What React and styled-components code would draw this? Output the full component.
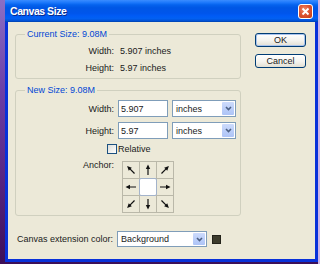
import React from 'react';
import styled, { createGlobalStyle } from 'styled-components';

const Global = createGlobalStyle`
  html, body { margin: 0; padding: 0; }
  body { width: 320px; height: 264px; overflow: hidden; font-family: "Liberation Sans", Arial, sans-serif; }
`;

const Desktop = styled.div`
  width: 320px;
  height: 264px;
  overflow: hidden;
  box-sizing: border-box;
  padding-left: 5px;
  background:
    linear-gradient(to right, transparent 318px, #cbb5e8 318px),
    linear-gradient(to bottom, #8b6fc4 0%, #6b3ea6 35%, #55237f 70%, #3c0f58 100%);
`;

const Window = styled.div`
  width: 313px;
  height: 262px;
  display: flex;
  flex-direction: column;
`;

const TitleBar = styled.div`
  height: 22px;
  flex: none;
  display: flex;
  align-items: center;
  justify-content: space-between;
  padding: 0 5px 0 5px;
  box-sizing: border-box;
  background: linear-gradient(to bottom, #3a8cff 0%, #1c78fb 12%, #0563ee 22%, #0057e5 35%, #0055eb 60%, #005bf5 72%, #0260f2 84%, #0052d6 94%, #0040ab 100%);
`;

const Title = styled.span`
  color: #fff;
  font-weight: bold;
  font-size: 10.5px;
  letter-spacing: -0.45px;
  text-shadow: 1px 1px 0 #0a2a8a;
`;

const CloseBtn = styled.div`
  width: 15px;
  height: 15px;
  box-sizing: border-box;
  border: 1px solid #fff;
  border-radius: 3px;
  background: radial-gradient(circle at 40% 35%, #ef8a6c 0%, #de5533 45%, #c23a14 100%);
  display: flex;
  align-items: center;
  justify-content: center;
`;

const Frame = styled.div`
  flex: 1;
  display: flex;
  border: 3px solid #0831d9;
  border-top: none;
  box-shadow: inset 1px 0 0 #166aee, inset -1px 0 0 #166aee, inset 0 -1px 0 #166aee;
`;

const Body = styled.div`
  flex: 1;
  background: #ece9d8;
  padding: 6px 0 0 7px;
  display: flex;
  flex-direction: column;
  font-size: 9px;
  color: #1a1a1a;
`;

const Top = styled.div`
  display: flex;
`;

const LeftCol = styled.div`
  width: 226px;
  display: flex;
  flex-direction: column;
  gap: 5px;
`;

const RightCol = styled.div`
  margin-left: 14px;
  padding-top: 5px;
  display: flex;
  flex-direction: column;
  gap: 7px;
`;

const Group = styled.fieldset`
  margin: 0;
  min-width: 0;
  border: 1px solid #d0d0bf;
  border-radius: 3px;
  padding: ${(p) => p.$pad};
`;

const Legend = styled.legend`
  margin-left: 9px;
  padding: 0 2px;
  color: #0046d5;
  font-size: 9px;
  line-height: 13px;
`;

const InfoGrid = styled.div`
  display: grid;
  grid-template-columns: 98px auto;
  column-gap: 6px;
  grid-auto-rows: 17px;
  align-items: center;
`;

const Label = styled.span`
  text-align: right;
  white-space: nowrap;
  align-self: ${(p) => (p.$top ? 'start' : 'center')};
  padding-top: ${(p) => (p.$top ? '1px' : '0')};
  line-height: ${(p) => (p.$top ? '9px' : 'normal')};
`;

const FormRow = styled.div`
  display: grid;
  grid-template-columns: 98px auto auto;
  column-gap: 4px;
  align-items: ${(p) => (p.$top ? 'start' : 'center')};
  justify-content: start;
  margin-top: ${(p) => p.$mt || 0}px;
`;

const TextBox = styled.input`
  width: 50px;
  height: 17px;
  box-sizing: border-box;
  border: 1px solid #7f9db9;
  background: #fff;
  padding: 0 2px;
  margin: 0;
  font: 9px "Liberation Sans", Arial, sans-serif;
  color: #1a1a1a;
  outline: none;
`;

const SelectBox = styled.div`
  width: ${(p) => p.$w}px;
  height: ${(p) => p.$h}px;
  box-sizing: border-box;
  border: 1px solid #7f9db9;
  background: #fff;
  display: flex;
  align-items: stretch;
`;

const SelectText = styled.span`
  flex: 1;
  padding-left: 3px;
  display: flex;
  align-items: center;
`;

const DropBtn = styled.span`
  width: 12px;
  margin: 1px;
  border-radius: 1px;
  background: linear-gradient(to bottom, #cddbfc 0%, #bccff9 50%, #aec4f6 100%);
  display: flex;
  align-items: center;
  justify-content: center;
`;

const CheckRow = styled.div`
  display: flex;
  align-items: center;
  height: 15px;
  margin-top: 2px;
  padding-left: 91px;
  gap: 1px;
`;

const CheckBox = styled.span`
  width: 10px;
  height: 10px;
  box-sizing: border-box;
  border: 1px solid #1c5180;
  background: linear-gradient(135deg, #dcdcd7, #fff);
`;

const AnchorGrid = styled.div`
  display: grid;
  grid-template-columns: repeat(3, 16px);
  grid-template-rows: repeat(3, 16px);
  gap: 1px;
  border: 1px solid #bab8a9;
  background: #bab8a9;
  margin-left: 4px;
  margin-top: 1px;
`;

const Cell = styled.div`
  background: #ece9d8;
  display: flex;
  align-items: center;
  justify-content: center;
`;

const CenterCell = styled.div`
  background: #fff;
  border: 1px solid #a3b3cb;
  border-radius: 2px;
  margin: -1px;
`;

const Button = styled.button`
  width: 51px;
  height: 14px;
  padding: 0;
  margin: 0;
  box-sizing: border-box;
  border: 1px solid #003c74;
  border-radius: 3px;
  background: linear-gradient(to bottom, #ffffff 0%, #f4f3ee 55%, #e2dfd3 100%);
  box-shadow: ${(p) => (p.$default ? 'inset 0 0 0 1px #a9c4ee' : 'none')};
  font: 9px "Liberation Sans", Arial, sans-serif;
  color: #1a1a1a;
  line-height: 12px;
`;

const BottomRow = styled.div`
  display: flex;
  align-items: center;
  margin-top: 15px;
`;

const BottomLabel = styled.span`
  width: 98px;
  text-align: right;
  white-space: nowrap;
  margin-right: 4px;
`;

const Swatch = styled.span`
  width: 9px;
  height: 9px;
  box-sizing: border-box;
  margin-left: 5px;
  border: 1px solid #24231a;
  background: #3d3c2c;
`;

const Chevron = () => (
  <svg width="7" height="5" viewBox="0 0 7 5">
    <path d="M1 1 L3.5 3.5 L6 1" fill="none" stroke="#4d6185" strokeWidth="1.6" />
  </svg>
);

const Arrow = ({ deg }) => (
  <svg width="16" height="16" viewBox="0 0 16 16" style={{ transform: `rotate(${deg}deg)` }}>
    <path d="M8 13 V6.5" stroke="#111" strokeWidth="1.2" />
    <polygon points="8,2.5 5.8,7 10.2,7" fill="#111" />
  </svg>
);

const Select = ({ w, h, children }) => (
  <SelectBox $w={w} $h={h}>
    <SelectText>{children}</SelectText>
    <DropBtn><Chevron /></DropBtn>
  </SelectBox>
);

const dirs = [-45, 0, 45, -90, null, 90, -135, 180, 135];

export default function App() {
  return (
    <>
      <Global />
      <Desktop>
        <Window>
          <TitleBar>
            <Title>Canvas Size</Title>
            <CloseBtn>
              <svg width="9" height="9" viewBox="0 0 9 9">
                <path d="M1.5 1.5 L7.5 7.5 M7.5 1.5 L1.5 7.5" stroke="#fff" strokeWidth="1.8" />
              </svg>
            </CloseBtn>
          </TitleBar>
          <Frame>
            <Body>
              <Top>
                <LeftCol>
                  <Group $pad="1px 0 2px 0">
                    <Legend>Current Size: 9.08M</Legend>
                    <InfoGrid>
                      <Label>Width:</Label>
                      <span>5.907 inches</span>
                      <Label>Height:</Label>
                      <span>5.97 inches</span>
                    </InfoGrid>
                  </Group>
                  <Group $pad="3px 0 2px 0">
                    <Legend>New Size: 9.08M</Legend>
                    <FormRow>
                      <Label>Width:</Label>
                      <TextBox defaultValue="5.907" readOnly />
                      <Select w={64} h={17}>inches</Select>
                    </FormRow>
                    <FormRow $mt={5}>
                      <Label>Height:</Label>
                      <TextBox defaultValue="5.97" readOnly />
                      <Select w={64} h={17}>inches</Select>
                    </FormRow>
                    <CheckRow>
                      <CheckBox />
                      <span>Relative</span>
                    </CheckRow>
                    <FormRow $mt={4} $top>
                      <Label $top>Anchor:</Label>
                      <AnchorGrid>
                        {dirs.map((d, i) =>
                          d === null ? (
                            <CenterCell key={i} />
                          ) : (
                            <Cell key={i}><Arrow deg={d} /></Cell>
                          )
                        )}
                      </AnchorGrid>
                    </FormRow>
                  </Group>
                </LeftCol>
                <RightCol>
                  <Button $default>OK</Button>
                  <Button>Cancel</Button>
                </RightCol>
              </Top>
              <BottomRow>
                <BottomLabel>Canvas extension color:</BottomLabel>
                <Select w={90} h={16}>Background</Select>
                <Swatch />
              </BottomRow>
            </Body>
          </Frame>
        </Window>
      </Desktop>
    </>
  );
}
